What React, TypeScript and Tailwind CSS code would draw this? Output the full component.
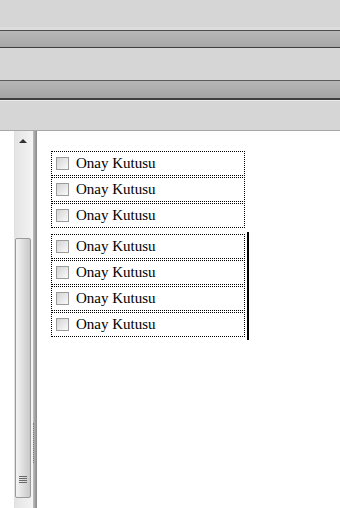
import React from "react"

const items1 = ["Onay Kutusu", "Onay Kutusu", "Onay Kutusu"]
const items2 = ["Onay Kutusu", "Onay Kutusu", "Onay Kutusu", "Onay Kutusu"]

function CheckRow({ label }: { label: string }) {
  return (
    <div className="flex items-center h-[25px] border border-dotted border-black pl-[4px] mb-px">
      <span className="w-[13px] h-[13px] border border-[#9c9c9c] bg-gradient-to-br from-[#d4d4d4] to-[#fafafa] shrink-0" />
      <span className="ml-[7px] text-[15px] leading-none text-black">{label}</span>
    </div>
  )
}

function Toolbar() {
  return (
    <div className="flex flex-col shrink-0">
      <div className="h-[27px] bg-[#d6d6d6]" />
      <div className="h-[3px] bg-[#dddddd]" />
      <div className="h-px bg-[#4e4e4e]" />
      <div className="h-[16px] bg-gradient-to-b from-[#b8b8b8] to-[#a6a6a6]" />
      <div className="h-px bg-[#3e3e3e]" />
      <div className="h-[32px] bg-[#d6d6d6]" />
      <div className="h-px bg-[#5a5a5a]" />
      <div className="h-[17px] bg-gradient-to-b from-[#b6b6b6] to-[#a4a4a4]" />
      <div className="h-[2px] bg-[#3e3e3e]" />
      <div className="h-px bg-[#ececec]" />
      <div className="h-[29px] bg-[#d6d6d6]" />
      <div className="h-px bg-[#a8a8a8]" />
    </div>
  )
}

function Scrollbar() {
  return (
    <div className="w-[17px] flex flex-col bg-gradient-to-r from-[#e4e4e4] to-[#f2f2f2] border-l border-[#e0e0e0]">
      <div className="h-[20px] flex items-center justify-center">
        <span className="w-0 h-0 border-l-[4px] border-r-[4px] border-b-[4px] border-l-transparent border-r-transparent border-b-[#303030]" />
      </div>
      <div className="h-[87px]" />
      <div className="flex-1 mb-[10px] rounded-[2px] border border-[#9a9a9a] bg-gradient-to-r from-[#f4f4f4] via-[#dedede] to-[#c8c8c8] flex flex-col justify-end items-center pb-[14px]">
        <div className="flex flex-col gap-px">
          <div className="w-[8px] h-px bg-[#6a6a6a]" />
          <div className="w-[8px] h-px bg-[#6a6a6a]" />
          <div className="w-[8px] h-px bg-[#6a6a6a]" />
          <div className="w-[8px] h-px bg-[#6a6a6a]" />
        </div>
      </div>
    </div>
  )
}

export default function App() {
  return (
    <div className="w-[340px] h-[508px] flex flex-col bg-white overflow-hidden" style={{ fontFamily: '"Liberation Serif", "Times New Roman", serif' }}>
      <Toolbar />
      <div className="flex flex-1 min-h-0">
        <div className="w-[14px] bg-white" />
        <Scrollbar />
        <div className="w-[2px] bg-[#f4f4f4]" />
        <div className="w-[4px] bg-gradient-to-r from-[#c0c0c0] to-[#888888] flex flex-col items-start">
          <div className="mt-[292px] h-[40px] border-l border-dotted border-[#777777]" />
        </div>
        <div className="flex-1 bg-white pl-[14px] pt-[20px]">
          <div className="w-[194px]">
            {items1.map((t, i) => (
              <CheckRow key={i} label={t} />
            ))}
          </div>
          <div className="w-[198px] mt-[4px] py-[2px] pr-[2px] border-r-2 border-black">
            {items2.map((t, i) => (
              <CheckRow key={i} label={t} />
            ))}
          </div>
        </div>
      </div>
    </div>
  )
}
